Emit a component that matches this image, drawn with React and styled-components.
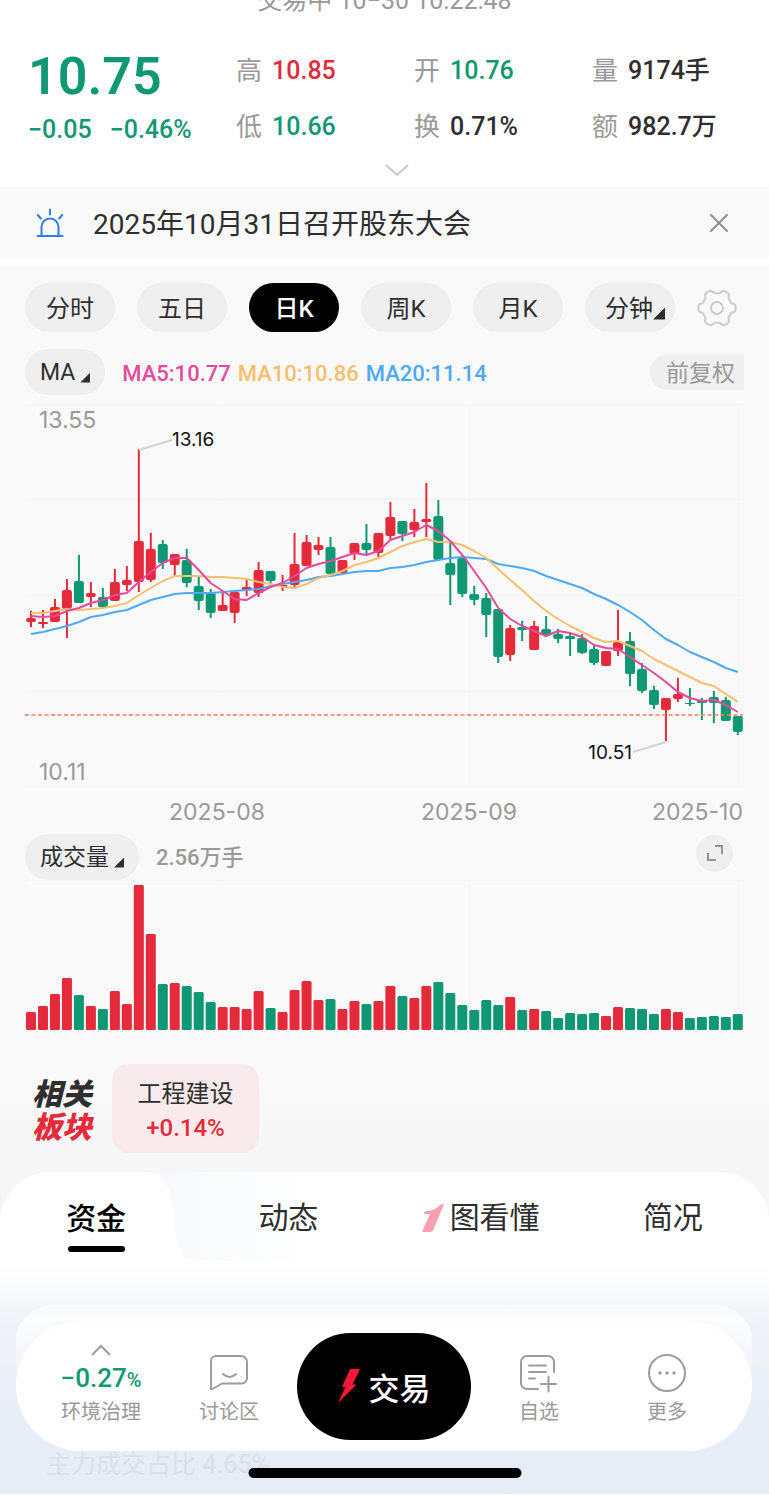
import styled, { createGlobalStyle, ThemeProvider, css } from 'styled-components';

const theme = {
    colors: {
        up: '#e52b3b',
        down: '#0f9873',
        ink: '#2e2e2e',
        muted: '#999999',
        chip: '#efefef',
        surface: '#f9f9f9',
        ma5: '#e9499b',
        ma10: '#f9be6e',
        ma20: '#4ea9f8',
    },
    fonts: {
        text: '"Roboto", "Noto Sans CJK SC", sans-serif',
        chart: '"Inter", "Noto Sans CJK SC", sans-serif',
    },
};

const GlobalStyle = createGlobalStyle`
    *, *::before, *::after {
        box-sizing: border-box;
    }

    body {
        margin: 0;
        background: #ffffff;
        color: ${theme.colors.ink};
        font-family: ${theme.fonts.text};
    }

    button {
        border: 0;
        padding: 0;
        background: none;
        color: inherit;
        font: inherit;
        cursor: pointer;
    }

    svg {
        display: block;
    }
`;

/* [direction, body top, body bottom, high, low, volume] */
const CANDLES = [
    ['r', 218, 222, 211, 227, 18], ['r', 222, 224, 210, 228, 24], ['r', 207, 222, 199, 222, 36],
    ['r', 190, 209, 179, 238, 52], ['g', 181, 203, 155, 203, 35], ['r', 193, 197, 182, 207, 24],
    ['g', 197, 207, 188, 208, 21], ['r', 182, 201, 169, 201, 39], ['r', 180, 185, 166, 191, 26],
    ['r', 141, 182, 49, 192, 145], ['r', 149, 180, 133, 182, 96], ['g', 144, 163, 140, 169, 46],
    ['r', 154, 165, 154, 176, 47], ['g', 160, 183, 149, 187, 44], ['g', 186, 201, 176, 210, 38],
    ['g', 193, 213, 189, 218, 28], ['r', 205, 211, 193, 211, 23], ['r', 192, 213, 192, 223, 23],
    ['r', 187, 190, 180, 196, 21], ['r', 170, 193, 162, 197, 39], ['g', 171, 181, 171, 184, 22],
    ['r', 185, 187, 175, 191, 18], ['r', 164, 185, 133, 187, 40], ['r', 142, 166, 135, 166, 49],
    ['r', 145, 150, 137, 155, 30], ['g', 147, 174, 137, 174, 31], ['r', 160, 173, 160, 173, 21],
    ['r', 143, 154, 143, 160, 29], ['g', 143, 150, 124, 155, 26], ['r', 133, 153, 133, 158, 29],
    ['r', 117, 136, 102, 140, 44], ['g', 121, 134, 121, 141, 34], ['r', 122, 130, 109, 137, 32],
    ['r', 119, 122, 83, 137, 44], ['g', 116, 160, 100, 160, 48], ['g', 163, 175, 143, 205, 37],
    ['g', 158, 194, 158, 197, 25], ['g', 194, 200, 186, 205, 20], ['g', 198, 215, 193, 237, 30],
    ['g', 209, 257, 209, 263, 25], ['r', 228, 255, 225, 261, 33], ['g', 227, 230, 221, 241, 20],
    ['r', 226, 250, 221, 250, 21], ['g', 229, 235, 216, 237, 19], ['g', 234, 239, 229, 243, 12],
    ['g', 236, 239, 233, 256, 17], ['g', 238, 253, 234, 254, 16], ['g', 249, 263, 244, 265, 17],
    ['r', 251, 266, 251, 266, 14], ['r', 242, 251, 210, 256, 23], ['g', 241, 274, 232, 286, 22],
    ['g', 269, 291, 263, 293, 21], ['g', 290, 305, 286, 309, 16], ['r', 298, 310, 298, 341, 21],
    ['r', 294, 299, 278, 302, 18], ['g', 303, 304, 288, 306, 12], ['g', 300, 303, 298, 320, 13],
    ['g', 297, 303, 291, 323, 14], ['g', 300, 321, 297, 321, 13], ['g', 316, 332, 316, 335, 16],
];

const MA5 = [
    216, 217, 216, 211, 208, 203, 200, 195, 193, 182, 172, 163, 158, 158, 170, 183, 191, 199, 200, 193,
    187, 183, 176, 168, 164, 161, 157, 153, 155, 151, 140, 136, 132, 125, 131, 141, 155, 171, 188, 208,
    219, 226, 231, 236, 231, 233, 237, 245, 248, 249, 257, 265, 273, 282, 292, 298, 301, 300, 305, 312,
];

const MA10 = [
    213, 213, 211, 209, 210, 209, 208, 206, 203, 195, 188, 181, 176, 176, 176, 177, 177, 178, 179, 182,
    184, 187, 188, 184, 178, 175, 171, 165, 162, 158, 152, 146, 142, 139, 142, 142, 145, 151, 158, 169,
    180, 190, 201, 211, 219, 226, 232, 238, 242, 241, 246, 251, 259, 265, 271, 277, 283, 286, 294, 302,
];

const MA20 = [
    234, 232, 229, 226, 222, 217, 215, 212, 210, 205, 200, 197, 194, 193, 193, 193, 192, 191, 190, 189,
    186, 184, 182, 180, 177, 176, 174, 172, 171, 171, 168, 167, 165, 162, 160, 158, 157, 158, 159, 164,
    166, 168, 171, 176, 180, 184, 188, 194, 199, 205, 212, 220, 230, 239, 245, 252, 257, 262, 268, 272,
];

const STEP = 11.98;
const candleX = (i) => 6 + i * STEP;
const toPoints = (values) => values.map((y, i) => `${candleX(i)},${y}`).join(' ');
const candleColor = (dir) => (dir === 'r' ? theme.colors.up : theme.colors.down);

const gearPoints = Array.from({ length: 120 }, (_, i) => {
    const a = (i / 120) * Math.PI * 2;
    const r = 16.7 + 1.9 * Math.tanh(2.4 * Math.cos(6 * a));
    return `${20 + r * Math.cos(a)},${20 + r * Math.sin(a)}`;
}).join(' ');

const Page = styled.main`
    min-height: 100vh;
    overflow: hidden;
`;

const MarketStatus = styled.div`
    display: flex;
    justify-content: center;
    align-items: flex-end;
    height: 12px;
    overflow: hidden;
    color: ${({ theme }) => theme.colors.muted};
    font-size: 25px;
    line-height: 22px;
    white-space: pre;
`;

const Quote = styled.section`
    display: grid;
    grid-template-columns: 208fr 178fr 178fr 149fr;
    padding: 37px 28px 0;
`;

const PriceBlock = styled.div`
    display: flex;
    flex-direction: column;
    gap: 12px;
    color: ${({ theme }) => theme.colors.down};
    font-weight: 500;
    white-space: nowrap;
`;

const Price = styled.strong`
    font-size: 52px;
    line-height: 56px;
    font-weight: 600;
`;

const Change = styled.div`
    display: flex;
    gap: 18px;
    font-size: 25px;
    line-height: 26px;
`;

const StatColumn = styled.dl`
    display: flex;
    flex-direction: column;
    gap: 20px;
    margin: 0;
    padding-top: 4px;
`;

const Stat = styled.div`
    display: flex;
    gap: 10px;
    font-size: 25px;
    line-height: 36px;
    white-space: nowrap;

    & > dt {
        color: ${({ theme }) => theme.colors.muted};
        font-size: 26px;
    }

    & > dd {
        margin: 0;
        color: ${({ theme, $tone }) => theme.colors[$tone || 'ink']};
        font-weight: 500;
    }
`;

const ExpandQuote = styled.button`
    display: block;
    width: 24px;
    margin: 18px auto 0;
    padding-bottom: 10px;
    transform: translateX(12px);
`;

const Notice = styled.section`
    display: flex;
    align-items: center;
    height: 71px;
    padding: 0 40px 0 36px;
    background: ${({ theme }) => theme.colors.surface};

    & > p {
        flex: 1;
        margin: 4px 0 0 29px;
        font-size: 28px;
        line-height: 40px;
    }
`;

const Market = styled.section`
    margin-top: 8px;
    padding: 17px 25px 19px;
    background: linear-gradient(#f9f9f9 90%, #f6f6f6);
`;

const PeriodRow = styled.nav`
    display: grid;
    grid-template-columns: repeat(6, 1fr) auto;
    align-items: center;
    gap: 22px;
    padding-right: 7px;
`;

const chip = css`
    display: flex;
    align-items: center;
    justify-content: center;
    border-radius: 25px;
    background: ${({ theme }) => theme.colors.chip};
    white-space: nowrap;
`;

const Period = styled.button`
    ${chip}
    height: 49px;
    padding-top: 3px;
    font-size: 24px;
    line-height: 32px;
    ${({ $active }) => $active && css`
        background: #000000;
        color: #ffffff;
        font-weight: 500;
    `}
`;

const MinutePeriod = styled(Period)`
    padding-left: 10px;
`;

const Picker = styled.button`
    ${chip}
    gap: 5px;
    height: 46px;
    padding: 2px 15px 0;
    font-size: 23px;
    line-height: 28px;
`;

const Corner = styled.span`
    width: ${({ $size }) => $size}px;
    height: ${({ $size }) => $size}px;
    margin-top: 9px;
    background: ${({ theme }) => theme.colors.ink};
    clip-path: polygon(100% 0, 100% 100%, 0 100%);
`;

const IndicatorRow = styled.div`
    display: flex;
    align-items: center;
    gap: 17px;
    margin-top: ${({ $top }) => $top}px;
`;

const Legend = styled.div`
    display: flex;
    flex: 1;
    gap: 7px;
    padding-top: 3px;
    font-size: 22px;
    font-weight: 500;
    line-height: 28px;
    white-space: nowrap;
`;

const LegendItem = styled.span`
    color: ${({ theme, $line }) => theme.colors[$line]};
`;

const AdjustTag = styled.button`
    height: 35px;
    padding: 1px 9px 0 16px;
    border-radius: 18px 0 0 18px;
    background: ${({ theme }) => theme.colors.chip};
    color: ${({ theme }) => theme.colors.muted};
    font-size: 23px;
    line-height: 35px;
`;

const Chart = styled.svg`
    width: 100%;
    height: auto;
    margin-top: ${({ $top }) => $top}px;
    overflow: visible;
    font-family: ${({ theme }) => theme.fonts.chart};
`;

const VolumeValue = styled.span`
    flex: 1;
    padding-top: 2px;
    color: ${({ theme }) => theme.colors.muted};
    font-size: 22px;
    font-weight: 500;
    line-height: 28px;
`;

const ExpandChart = styled.button`
    display: grid;
    place-items: center;
    width: 37px;
    height: 37px;
    margin: 0 11px 8px 0;
    border-radius: 50%;
    background: ${({ theme }) => theme.colors.chip};
`;

const Sectors = styled.div`
    display: flex;
    align-items: center;
    gap: 20px;
    margin-top: 34px;
    padding-left: 7px;
`;

const SectorTitle = styled.h2`
    margin: 0;
    padding-top: 5px;
    font-size: 30px;
    font-style: italic;
    font-weight: 900;
    line-height: 33px;

    & > span {
        display: block;
    }

    & > span + span {
        color: ${({ theme }) => theme.colors.up};
    }
`;

const SectorCard = styled.a`
    display: flex;
    flex-direction: column;
    align-items: center;
    justify-content: center;
    width: 147px;
    height: 89px;
    padding-top: 4px;
    border-radius: 16px;
    background: #f9ebed;
    color: ${({ theme }) => theme.colors.ink};
    font-size: 24px;
    line-height: 34px;
    text-decoration: none;

    & > b {
        color: ${({ theme }) => theme.colors.up};
        font-weight: 500;
    }
`;

const Details = styled.section`
    background: linear-gradient(#f6f6f6 50px, transparent 50px);
`;

const DetailsSheet = styled.div`
    position: relative;
    border-radius: 50px 50px 0 0;
    background: linear-gradient(#ffffff 89px, #fdfdfe 105px, #f1f4f8 140px, #e9eef7 220px, #e6ecf6);
`;

const TabGlow = styled.svg`
    position: absolute;
    top: 0;
    left: 19%;
`;

const Tabs = styled.nav`
    position: relative;
    display: grid;
    grid-template-columns: repeat(4, 1fr);
    height: 89px;
`;

const Tab = styled.a`
    display: flex;
    align-items: center;
    justify-content: center;
    gap: 5px;
    padding-top: 2px;
    color: ${({ theme }) => theme.colors.ink};
    font-size: 30px;
    line-height: 44px;
    text-decoration: none;
    ${({ $active }) => $active && css`
        flex-direction: column;
        padding-top: 15px;
        color: #000000;
        font-weight: 500;

        &::after {
            content: '';
            width: 57px;
            height: 6px;
            border-radius: 3px;
            background: #000000;
        }
    `}
`;

const FundCard = styled.div`
    margin: 44px 17px 0 16px;
    padding-top: 16px;
    border-radius: 36px 36px 0 0;
    background: linear-gradient(#f7f9fb, #fafbfd 16px, rgba(250, 251, 253, 0) 90px);
`;

const BottomNav = styled.nav`
    display: grid;
    grid-template-columns: 1fr 1fr 182px 1fr 1fr;
    align-items: center;
    height: 130px;
    padding: 0 21px;
    border-radius: 65px;
    background: #ffffff;
`;

const NavItem = styled.button`
    display: flex;
    flex-direction: column;
    align-items: center;
    justify-content: flex-end;
    gap: 5px;
    height: 80px;
    color: ${({ theme }) => theme.colors.muted};
    font-size: 20px;
    line-height: 28px;
`;

const IndexChange = styled.span`
    display: flex;
    flex-direction: column;
    align-items: center;
    gap: 9px;
    color: ${({ theme }) => theme.colors.down};
    font-size: 26px;
    font-weight: 500;
    line-height: 26px;

    & small {
        font-size: 20px;
    }
`;

const TradeButton = styled.button`
    display: flex;
    align-items: center;
    justify-content: center;
    gap: 9px;
    height: 107px;
    margin: 0 4px;
    border-radius: 54px;
    background: #000000;
    color: #ffffff;
    font-size: 31px;
    font-weight: 500;
`;

const Footer = styled.footer`
    position: relative;
    height: 43px;
    padding-left: 46px;
    color: #dbe1ec;
    font-size: 25px;
    line-height: 28px;
    white-space: nowrap;

    & > b {
        font-weight: 500;
    }
`;

const HomeBar = styled.div`
    position: absolute;
    top: 17px;
    left: 50%;
    width: 273px;
    height: 10px;
    border-radius: 5px;
    background: #000000;
    transform: translateX(-50%);
`;

const AlarmIcon = () => (
    <svg width="28" height="30" viewBox="0 0 28 30" fill="none" stroke="#2f7bf0" strokeWidth="2" strokeLinecap="round">
        <path d="M1.5 28h25M5.5 28V19a8.5 8.5 0 0 1 17 0v9M14 1.5v5M1.8 7l3 3.5M26.2 7l-3 3.5" />
    </svg>
);

const CloseIcon = () => (
    <svg width="20" height="20" viewBox="0 0 20 20" stroke="#8f8f8f" strokeWidth="2" strokeLinecap="round">
        <path d="M2 2l16 16M18 2L2 18" />
    </svg>
);

const GearIcon = () => (
    <svg width="40" height="40" viewBox="0 0 40 40" fill="none" stroke="#cbcbcb" strokeWidth="2" strokeLinejoin="round">
        <polygon points={gearPoints} />
        <circle cx="20" cy="20" r="6" />
    </svg>
);

const ChatIcon = () => (
    <svg width="40" height="40" viewBox="0 0 40 40" fill="none" stroke="#9c9c9c" strokeWidth="2" strokeLinecap="round" strokeLinejoin="round">
        <path d="M2 35.5V8a5 5 0 0 1 5-5h25a6 6 0 0 1 6 6v16a5.5 5.5 0 0 1-5.5 5.5H13L3.5 36Q2 36.5 2 35.5Z" />
        <path d="M14 21q6.5 6 13 0" />
    </svg>
);

const WatchIcon = () => (
    <svg width="40" height="40" viewBox="0 0 40 40" fill="none" stroke="#9c9c9c" strokeWidth="2" strokeLinecap="round">
        <path d="M35 19V9a6 6 0 0 0-6-6H8a6 6 0 0 0-6 6v21a6 6 0 0 0 6 6h11" />
        <path d="M10 12.5h17M10 19h17M10 25.5h6M22 31h15M29.5 23.5v15" />
    </svg>
);

const MoreIcon = () => (
    <svg width="40" height="40" viewBox="0 0 40 40" fill="none" stroke="#9c9c9c" strokeWidth="2">
        <circle cx="20" cy="20" r="18" />
        <g fill="#9c9c9c" stroke="none">
            <circle cx="13" cy="20" r="1.7" />
            <circle cx="20" cy="20" r="1.7" />
            <circle cx="27" cy="20" r="1.7" />
        </g>
    </svg>
);

const PriceChart = () => (
    <Chart $top={5} viewBox="0 0 719 430" role="img" aria-label="日K">
        <g fill="none" stroke="#f6f6f6">
            <rect x="0.5" y="4.5" width="718" height="382" />
            <path d="M0 99.5h718M0 195.5h718M0 291.5h718M192.5 4v382M444.5 4v382" />
        </g>
        <g fill={theme.colors.muted} fontSize="23">
            <text x="14" y="28">13.55</text>
            <text x="14" y="380">10.11</text>
            <text x="192" y="420" textAnchor="middle">2025-08</text>
            <text x="444" y="420" textAnchor="middle">2025-09</text>
            <text x="718" y="420" textAnchor="end">2025-10</text>
        </g>
        {CANDLES.map(([dir, top, bottom, high, low], i) => (
            <g key={i} fill={candleColor(dir)}>
                <rect x={candleX(i) - 1} y={high} width="2" height={low - high} />
                <rect x={candleX(i) - 5} y={top} width="10" height={bottom - top} rx={Math.min(2, (bottom - top) / 2)} />
            </g>
        ))}
        <path d="M0 315h718" stroke="#f4805f" strokeWidth="1.5" strokeDasharray="4 2.5" />
        <g fill="none" strokeWidth="2" strokeLinejoin="round">
            <polyline points={toPoints(MA20)} stroke={theme.colors.ma20} />
            <polyline points={toPoints(MA10)} stroke={theme.colors.ma10} />
            <polyline points={toPoints(MA5)} stroke={theme.colors.ma5} />
        </g>
        <path d="M114 50l33-10M641 342l-33 10" stroke="#d4d4d4" strokeWidth="2" />
        <g fill="#111111" fontSize="19">
            <text x="147" y="46">13.16</text>
            <text x="607" y="359" textAnchor="end">10.51</text>
        </g>
    </Chart>
);

const VolumeChart = () => (
    <Chart $top={0} viewBox="0 0 719 150" role="img" aria-label="成交量">
        <path d="M0 0.5h718M0.5 0v150M192.5 0v150M444.5 0v150M718.5 0v150" stroke="#f6f6f6" />
        {CANDLES.map(([dir, , , , , volume], i) => (
            <rect key={i} x={candleX(i) - 5} y={150 - volume} width="10" height={volume} rx="1.5" fill={candleColor(dir)} />
        ))}
    </Chart>
);

const STATS = [
    [{ label: '高', value: '10.85', tone: 'up' }, { label: '低', value: '10.66', tone: 'down' }],
    [{ label: '开', value: '10.76', tone: 'down' }, { label: '换', value: '0.71%' }],
    [{ label: '量', value: '9174手' }, { label: '额', value: '982.7万' }],
];

const PERIODS = ['分时', '五日', '日K', '周K', '月K'];

const App = () => (
    <ThemeProvider theme={theme}>
        <GlobalStyle />
        <Page>
            <MarketStatus>交易中 10−30 10:22:48</MarketStatus>
            <Quote>
                <PriceBlock>
                    <Price>10.75</Price>
                    <Change><span>−0.05</span><span>−0.46%</span></Change>
                </PriceBlock>
                {STATS.map((column, i) => (
                    <StatColumn key={i}>
                        {column.map(({ label, value, tone }) => (
                            <Stat key={label} $tone={tone}><dt>{label}</dt><dd>{value}</dd></Stat>
                        ))}
                    </StatColumn>
                ))}
            </Quote>
            <ExpandQuote aria-label="展开">
                <svg width="24" height="14" viewBox="0 0 24 14" fill="none" stroke="#c8c8c8" strokeWidth="2">
                    <path d="M1 2l11 10L23 2" />
                </svg>
            </ExpandQuote>

            <Notice>
                <AlarmIcon />
                <p>2025年10月31日召开股东大会</p>
                <button aria-label="关闭"><CloseIcon /></button>
            </Notice>

            <Market>
                <PeriodRow>
                    {PERIODS.map((name) => (
                        <Period key={name} $active={name === '日K'}>{name}</Period>
                    ))}
                    <MinutePeriod>分钟<Corner $size={12} /></MinutePeriod>
                    <button aria-label="设置"><GearIcon /></button>
                </PeriodRow>
                <IndicatorRow $top={17}>
                    <Picker>MA<Corner $size={10} /></Picker>
                    <Legend>
                        <LegendItem $line="ma5">MA5:10.77</LegendItem>
                        <LegendItem $line="ma10">MA10:10.86</LegendItem>
                        <LegendItem $line="ma20">MA20:11.14</LegendItem>
                    </Legend>
                    <AdjustTag>前复权</AdjustTag>
                </IndicatorRow>
                <PriceChart />
                <IndicatorRow $top={4}>
                    <Picker>成交量<Corner $size={10} /></Picker>
                    <VolumeValue>2.56万手</VolumeValue>
                    <ExpandChart aria-label="放大">
                        <svg width="18" height="18" viewBox="0 0 18 18" fill="none" stroke="#949494" strokeWidth="2">
                            <path d="M9 2h7v8M2 9v7h8" />
                        </svg>
                    </ExpandChart>
                </IndicatorRow>
                <VolumeChart />
                <Sectors>
                    <SectorTitle><span>相关</span><span>板块</span></SectorTitle>
                    <SectorCard href="#sector">工程建设<b>+0.14%</b></SectorCard>
                </Sectors>
            </Market>

            <Details>
                <DetailsSheet>
                    <TabGlow width="160" height="89" viewBox="0 0 160 89">
                        <defs>
                            <linearGradient id="glow">
                                <stop offset="0.15" stopColor="#f7f9fc" />
                                <stop offset="1" stopColor="#ffffff" />
                            </linearGradient>
                        </defs>
                        <path d="M0 0C20 2 26 20 28 45C30 75 34 89 50 89H160V0Z" fill="url(#glow)" />
                    </TabGlow>
                    <Tabs>
                        <Tab href="#funds" $active>资金</Tab>
                        <Tab href="#news">动态</Tab>
                        <Tab href="#chart">
                            <svg width="23" height="28" viewBox="0 0 23 28" fill="#fa9fb0">
                                <path d="M22 0L11 26.5Q10 28 8 28H1Q0 28 0.5 26.5L8 10H1.5L3 7.5Q14 6.5 18 1Q20 0 22 0Z" />
                            </svg>
                            图看懂
                        </Tab>
                        <Tab href="#profile">简况</Tab>
                    </Tabs>
                    <FundCard>
                        <BottomNav>
                            <NavItem>
                                <IndexChange>
                                    <svg width="20" height="12" viewBox="0 0 20 12" fill="none" stroke="#9c9c9c" strokeWidth="2">
                                        <path d="M1 11l9-9 9 9" />
                                    </svg>
                                    <span>−0.27<small>%</small></span>
                                </IndexChange>
                                环境治理
                            </NavItem>
                            <NavItem><ChatIcon />讨论区</NavItem>
                            <TradeButton>
                                <svg width="22" height="34" viewBox="0 0 22 34" fill="#fb1537">
                                    <path d="M12 0h10l-7.5 15.5h4L0 34l7.5-16H4Z" />
                                </svg>
                                交易
                            </TradeButton>
                            <NavItem><WatchIcon />自选</NavItem>
                            <NavItem><MoreIcon />更多</NavItem>
                        </BottomNav>
                    </FundCard>
                    <Footer>
                        主力成交占比 <b>4.65%</b>
                        <HomeBar />
                    </Footer>
                </DetailsSheet>
            </Details>
        </Page>
    </ThemeProvider>
);

export default App;
